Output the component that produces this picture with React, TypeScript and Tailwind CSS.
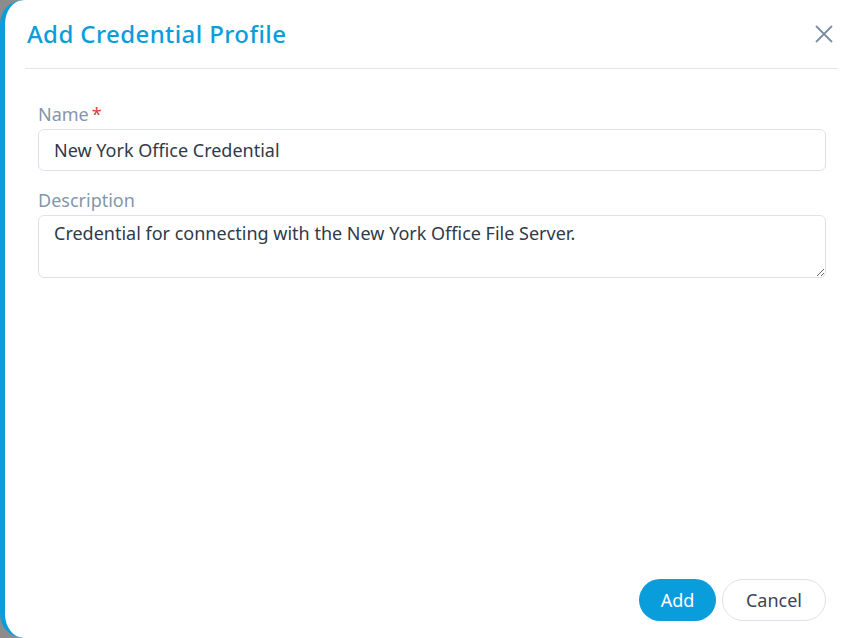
export default function App() {
  return (
    <div className="w-[857px] h-[638px] bg-[#8c8c8c] overflow-hidden" style={{ fontFamily: '"Noto Sans", sans-serif' }}>
      <div className="h-full w-[880px] bg-white rounded-l-[24px] border-l-[5px] border-[#0a9ddc] flex flex-col">
        {/* Header */}
        <div className="flex items-center justify-between h-[69px] ml-[20px] w-[813px] pr-[5px] border-b border-[#e1e5ec]">
          <h2 className="text-[24px] tracking-[0.4px] font-medium text-[#0a9ddc] pl-[2px]">Add Credential Profile</h2>
          <button className="text-[#7c8ea1]">
            <svg width="18" height="18" viewBox="0 0 18 18" fill="none" stroke="currentColor" strokeWidth="1.8" strokeLinecap="round">
              <path d="M1.5 1.5 L16.5 16.5 M16.5 1.5 L1.5 16.5" />
            </svg>
          </button>
        </div>

        {/* Body */}
        <div className="flex-1 flex flex-col pl-[33px] w-[821px] pt-[33px] gap-[17px]">
          <div className="flex flex-col gap-[2px]">
            <label className="text-[18px] text-[#8596aa] leading-[25px]">
              Name<span className="text-[#e0413a] ml-[3px]">*</span>
            </label>
            <input
              readOnly
              value="New York Office Credential"
              className="h-[42px] w-full rounded-[6px] border border-[#dde2ea] px-[15px] text-[18px] text-[#2f3a4a] outline-none"
            />
          </div>
          <div className="flex flex-col gap-[2px]">
            <label className="text-[18px] text-[#8596aa] leading-[25px]">Description</label>
            <textarea
              readOnly
              value="Credential for connecting with the New York Office File Server."
              className="h-[63px] w-full rounded-[6px] border border-[#dde2ea] px-[15px] pt-[4px] text-[18px] text-[#2f3a4a] outline-none resize-y"
            />
          </div>
        </div>

        {/* Footer */}
        <div className="flex justify-end gap-[6px] w-[821px] pb-[17px]">
          <button className="h-[42px] w-[77px] rounded-full bg-[#0a9ddc] text-white text-[18px]">Add</button>
          <button className="h-[42px] w-[104px] rounded-full border border-[#dde2ea] bg-white text-[#3a4556] text-[18px]">Cancel</button>
        </div>
      </div>
    </div>
  );
}
